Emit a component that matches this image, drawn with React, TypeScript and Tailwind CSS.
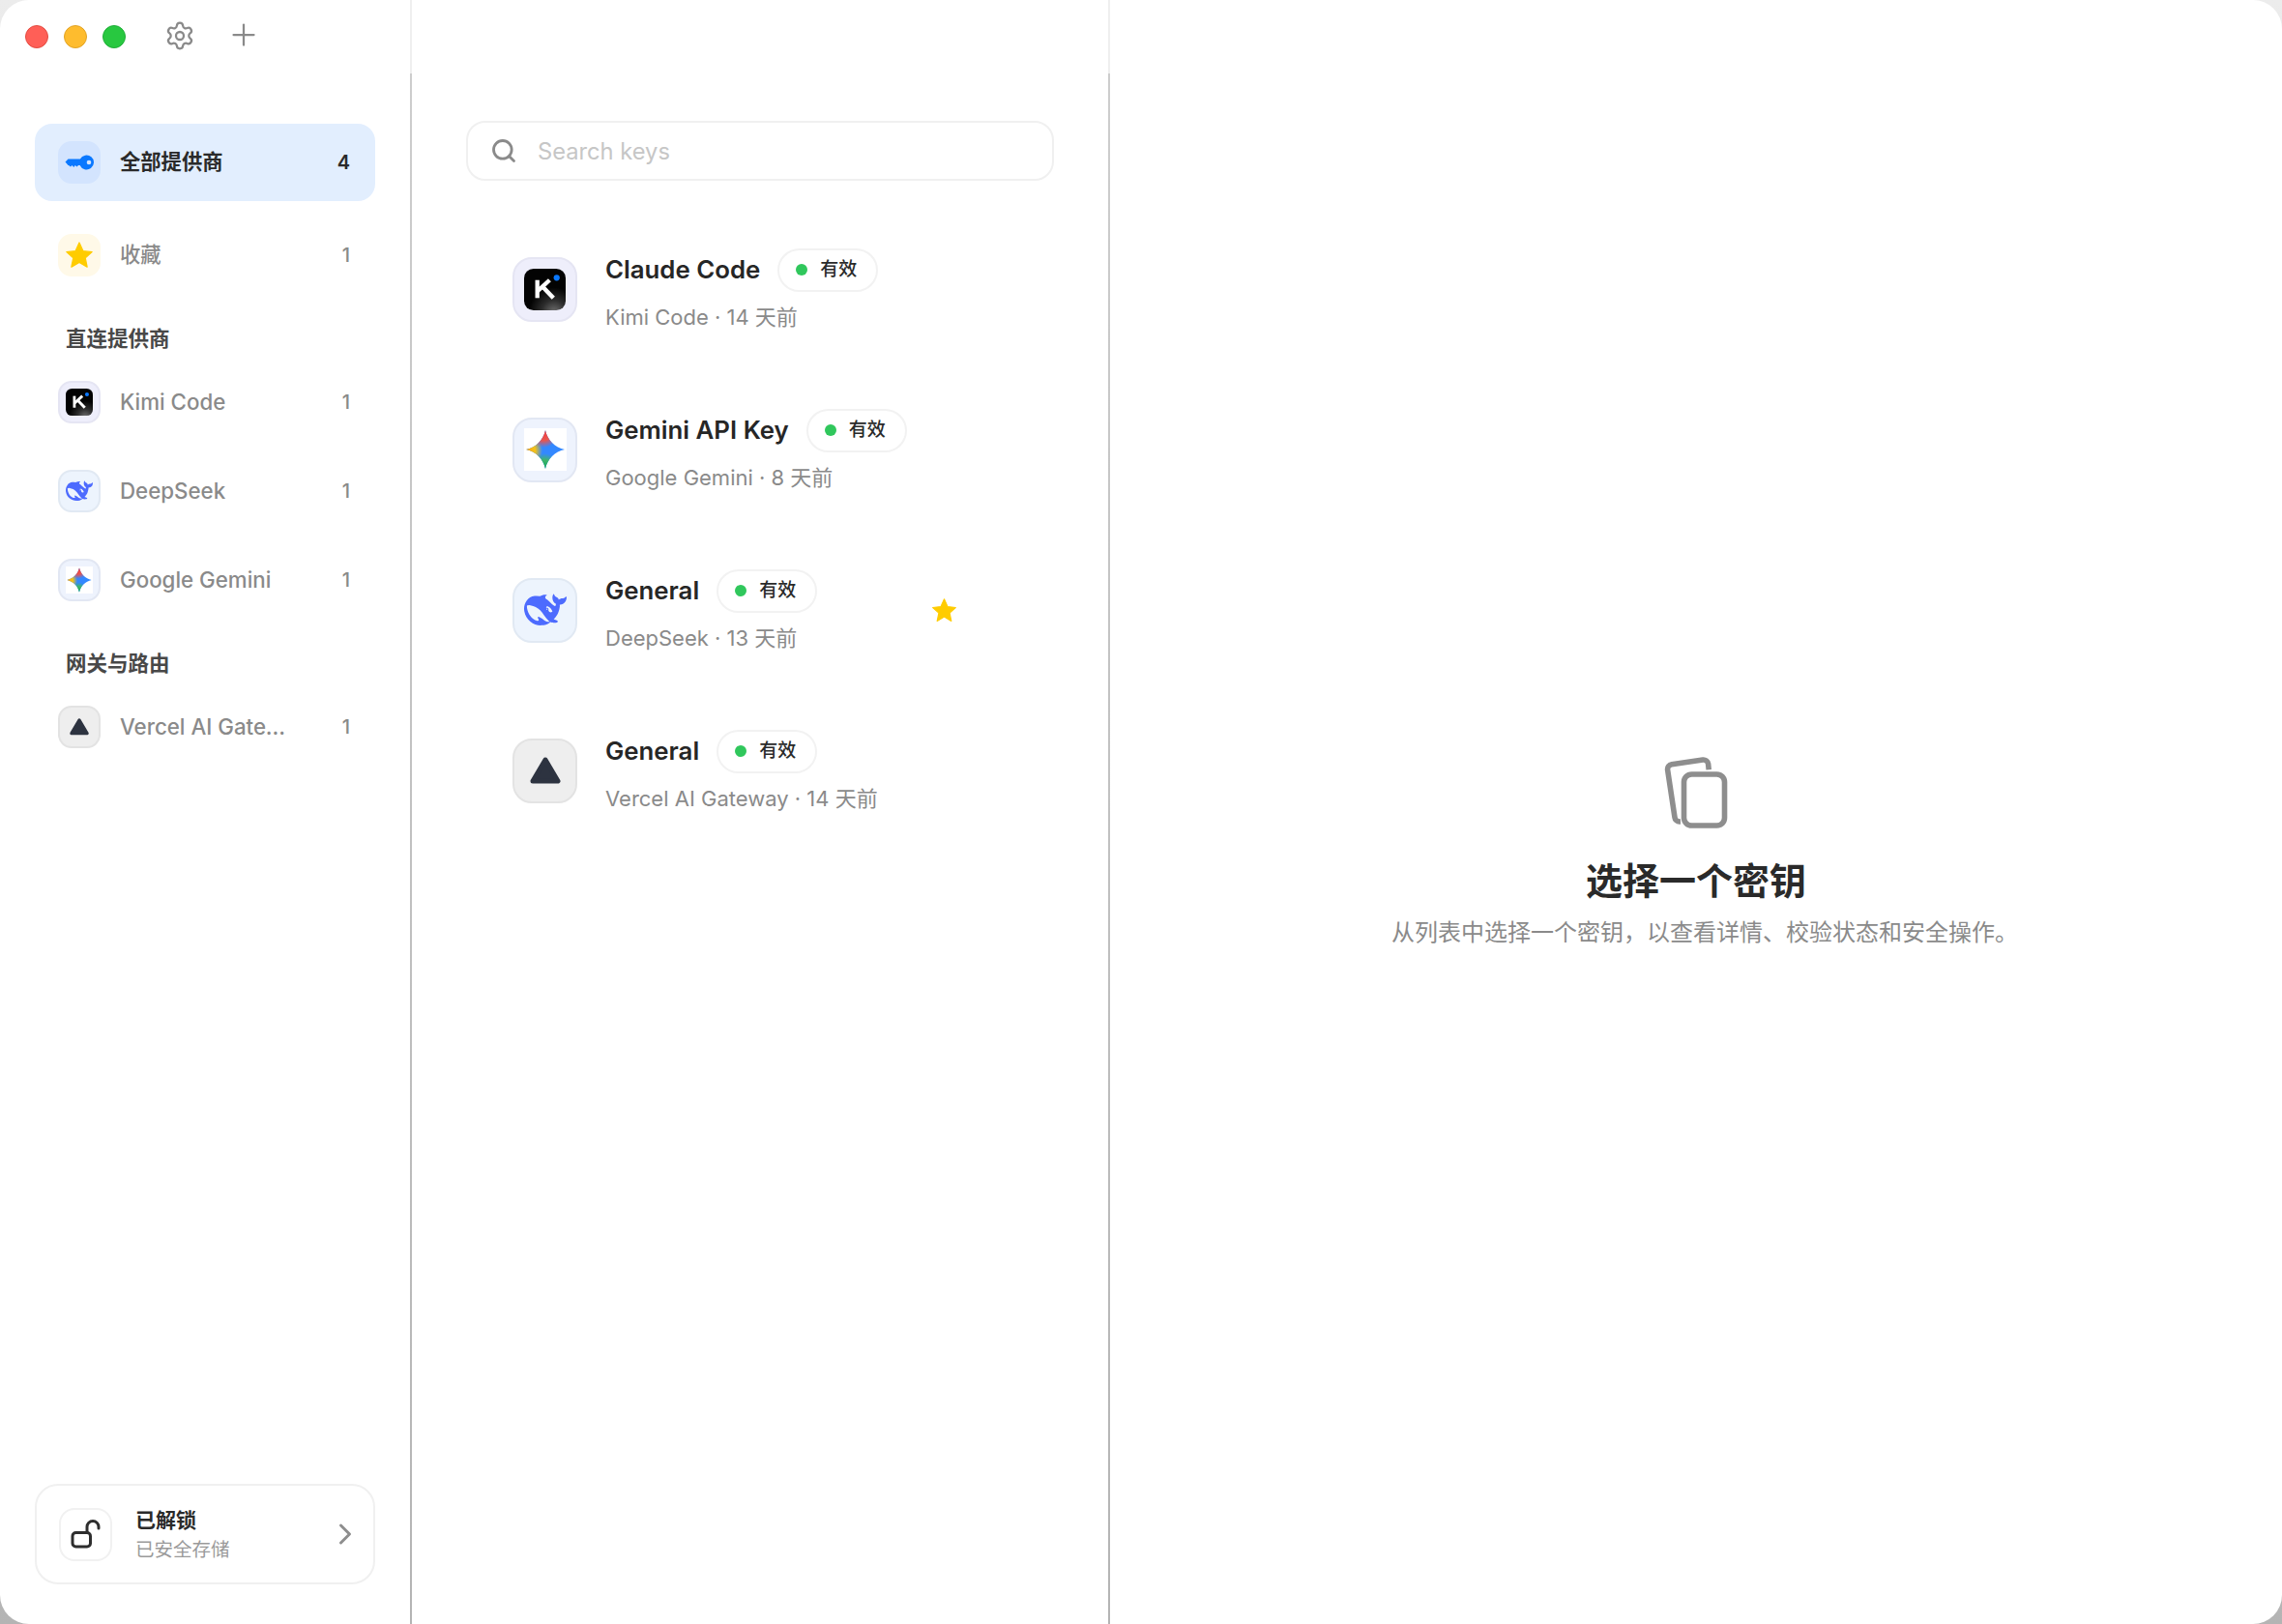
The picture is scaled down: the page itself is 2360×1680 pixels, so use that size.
import { Plus, Search, Settings, ChevronRight } from "lucide-react";

const WHALE =
  "M23.748 4.482c-.254-.124-.364.113-.512.234-.051.039-.094.09-.137.136-.372.397-.806.657-1.373.626-.829-.046-1.537.214-2.163.848-.133-.782-.575-1.248-1.247-1.548-.352-.156-.708-.311-.955-.65-.172-.241-.219-.51-.305-.774-.055-.16-.11-.323-.293-.35-.2-.031-.278.136-.356.276-.313.572-.434 1.202-.422 1.84.027 1.436.633 2.58 1.838 3.393.137.093.172.187.129.323-.082.28-.18.552-.266.833-.055.179-.137.217-.329.14a5.526 5.526 0 01-1.736-1.18c-.857-.828-1.631-1.742-2.597-2.458a11.365 11.365 0 00-.689-.471c-.985-.957.13-1.743.388-1.836.27-.098.093-.432-.779-.428-.872.004-1.67.295-2.687.684a3.055 3.055 0 01-.465.137 9.597 9.597 0 00-2.883-.102c-1.885.21-3.39 1.102-4.497 2.623C.082 8.606-.231 10.684.152 12.85c.403 2.284 1.569 4.175 3.36 5.653 1.858 1.533 3.997 2.284 6.438 2.14 1.482-.085 3.133-.284 4.994-1.86.47.234.962.327 1.78.397.63.059 1.236-.03 1.705-.128.735-.156.684-.837.419-.961-2.155-1.004-1.682-.595-2.113-.926 1.096-1.296 2.746-2.642 3.392-7.003.05-.347.007-.565 0-.845-.004-.17.035-.237.23-.256a4.173 4.173 0 001.545-.475c1.396-.763 1.96-2.015 2.093-3.517.02-.23-.004-.467-.247-.588zM11.581 18c-2.089-1.642-3.102-2.183-3.52-2.16-.392.024-.321.471-.235.763.09.288.207.486.371.739.114.167.192.416-.113.603-.673.416-1.842-.14-1.897-.167-1.361-.802-2.5-1.86-3.301-3.307-.774-1.393-1.224-2.887-1.298-4.482-.02-.386.093-.522.477-.592a4.696 4.696 0 011.529-.039c2.132.312 3.946 1.265 5.468 2.774.868.86 1.525 1.887 2.202 2.891.72 1.066 1.494 2.082 2.48 2.914.348.292.625.514.891.677-.802.09-2.14.11-3.054-.614zm1-6.44a.306.306 0 01.415-.287.302.302 0 01.2.288.306.306 0 01-.31.307.303.303 0 01-.304-.308zm3.11 1.596c-.2.081-.399.151-.59.16a1.245 1.245 0 01-.798-.254c-.274-.23-.47-.358-.552-.758a1.73 1.73 0 01.016-.588c.07-.327-.008-.537-.239-.727-.187-.156-.426-.199-.688-.199a.559.559 0 01-.254-.078c-.11-.054-.2-.19-.114-.358.028-.054.16-.186.192-.21.356-.202.767-.136 1.146.016.352.144.618.408 1.001.782.391.451.462.576.685.914.176.265.336.537.445.848.067.195-.019.354-.25.452z";

const StarIcon = ({ size }: { size: number }) => (
  <svg width={size} height={size} viewBox="0 0 24 24">
    <path
      d="M12 1.6l3.1 6.9 7.4.8-5.5 5 1.5 7.4-6.5-3.8-6.5 3.8L7 14.3l-5.5-5 7.4-.8z"
      fill="#ffcc00"
      stroke="#ffcc00"
      strokeWidth="1"
      strokeLinejoin="round"
    />
  </svg>
);

const KeyIcon = () => (
  <svg width="30" height="16" viewBox="0 0 30 16">
    <path
      d="M0.5 7.5L3.5 4.5H15.87A7.5 7.5 0 1 1 15.63 11H14l-1.5 1.5-1.7-1.5-1.5 2-1.8-2-1.5 1.5L4 11H3.5z"
      fill="#0a78ff"
    />
    <circle cx="25" cy="8" r="2.3" fill="#d3e4fe" />
  </svg>
);

const KimiLogo = ({ size }: { size: number }) => (
  <svg width={size} height={size} viewBox="0 0 44 44">
    <defs>
      <radialGradient id={`kimi-haze-${size}`} cx="0.72" cy="1.05" r="0.6">
        <stop offset="0" stopColor="#707070" />
        <stop offset="0.5" stopColor="#2c2c2c" />
        <stop offset="1" stopColor="#030303" />
      </radialGradient>
    </defs>
    <rect width="44" height="44" rx="10" fill={`url(#kimi-haze-${size})`} />
    <line x1="14" y1="12" x2="14" y2="31" stroke="#fff" strokeWidth="4.4" />
    <line x1="14" y1="24" x2="27" y2="12" stroke="#fff" strokeWidth="4.4" />
    <line x1="20" y1="19.5" x2="31" y2="31" stroke="#fff" strokeWidth="4.6" />
    <circle cx="34.5" cy="9.5" r="3.2" fill="#0a78ff" />
  </svg>
);

const WhaleLogo = ({ size }: { size: number }) => (
  <svg width={size} height={size} viewBox="0 0 24 24">
    <path d={WHALE} fill="#4d6bfe" />
  </svg>
);

const GeminiLogo = ({ size }: { size: number }) => (
  <svg width={size} height={size} viewBox="0 0 44 44">
    <defs>
      <clipPath id={`gem-clip-${size}`}>
        <path d="M22 2C24 12 32 20 42 22 32 24 24 32 22 42 20 32 12 24 2 22 12 20 20 12 22 2Z" />
      </clipPath>
      <radialGradient id={`gem-r-${size}`} gradientUnits="userSpaceOnUse" cx="20" cy="4" r="16">
        <stop offset="0" stopColor="#f53d3d" />
        <stop offset="0.55" stopColor="#e8554f" />
        <stop offset="1" stopColor="#e8554f" stopOpacity="0" />
      </radialGradient>
      <radialGradient id={`gem-y-${size}`} gradientUnits="userSpaceOnUse" cx="4" cy="23" r="15">
        <stop offset="0" stopColor="#ffa90f" />
        <stop offset="0.5" stopColor="#f2c21a" />
        <stop offset="1" stopColor="#f2c21a" stopOpacity="0" />
      </radialGradient>
      <radialGradient id={`gem-g-${size}`} gradientUnits="userSpaceOnUse" cx="21" cy="41" r="15">
        <stop offset="0" stopColor="#12a85a" />
        <stop offset="0.55" stopColor="#3fb56b" />
        <stop offset="1" stopColor="#3fb56b" stopOpacity="0" />
      </radialGradient>
    </defs>
    <g clipPath={`url(#gem-clip-${size})`}>
      <rect width="44" height="44" fill="#3388ff" />
      <rect width="44" height="44" fill={`url(#gem-y-${size})`} />
      <rect width="44" height="44" fill={`url(#gem-g-${size})`} />
      <rect width="44" height="44" fill={`url(#gem-r-${size})`} />
    </g>
  </svg>
);

const VercelLogo = ({ width }: { width: number }) => (
  <svg width={width} viewBox="0 0 32 28">
    <path
      d="M16 3L29 25H3z"
      fill="#2d3340"
      stroke="#2d3340"
      strokeWidth="5"
      strokeLinejoin="round"
    />
  </svg>
);

const DIVIDER = (
  <div className="flex w-[2px] shrink-0 flex-col">
    <div className="h-[76px] bg-[#efefef]" />
    <div className="flex-1 bg-gradient-to-b from-[#cdcdcd] to-[#b4b4b4]" />
  </div>
);

const providers = [
  { key: "kimi", name: "Kimi Code", tint: "bg-[#eeeefb] border-[#e5e5f3]" },
  { key: "deepseek", name: "DeepSeek", tint: "bg-[#edf4fd] border-[#e1e9f3]" },
  { key: "gemini", name: "Google Gemini", tint: "bg-[#eef3fd] border-[#e2e7f3]" },
];

const SmallLogo = ({ kind }: { kind: string }) => {
  if (kind === "kimi") return <KimiLogo size={28} />;
  if (kind === "deepseek") return <WhaleLogo size={28} />;
  if (kind === "gemini") {
    return (
      <span className="flex h-[28px] w-[28px] items-center justify-center bg-white">
        <GeminiLogo size={28} />
      </span>
    );
  }
  return <VercelLogo width={20} />;
};

const BigLogo = ({ kind }: { kind: string }) => {
  if (kind === "kimi") return <KimiLogo size={43} />;
  if (kind === "deepseek") return <WhaleLogo size={44} />;
  if (kind === "gemini") {
    return (
      <span className="flex h-[44px] w-[44px] items-center justify-center bg-white">
        <GeminiLogo size={44} />
      </span>
    );
  }
  return <VercelLogo width={32} />;
};

const SideRow = ({
  icon,
  tint,
  label,
  count,
  active,
  cjk,
  truncate,
}: {
  icon: React.ReactNode;
  tint: string;
  label: string;
  count: number;
  active?: boolean;
  cjk?: boolean;
  truncate?: boolean;
}) => (
  <div
    className={`flex h-[80px] items-center rounded-[18px] pl-[24px] pr-[26px] ${
      active ? "bg-[#e2eefe]" : ""
    }`}
  >
    <span
      className={`flex h-[44px] w-[44px] items-center justify-center rounded-[14px] border-2 ${tint}`}
    >
      {icon}
    </span>
    <span
      className={`ml-[20px] ${cjk ? "text-[21.3px]" : "text-[22.3px]"} ${
        truncate ? "max-w-[172px] truncate" : ""
      } ${active ? "font-semibold text-[#2a2a2a]" : "font-medium text-[#8a8a8a]"}`}
    >
      {label}
    </span>
    <span
      className={`ml-auto text-[20px] ${
        active ? "font-semibold text-[#2a2a2a]" : "font-medium text-[#8a8a8a]"
      }`}
    >
      {count}
    </span>
  </div>
);

const SectionLabel = ({ children }: { children: string }) => (
  <div className="pl-[32px] text-[21.5px] font-bold leading-[28px] text-[#484848]">{children}</div>
);

const keys = [
  { name: "Claude Code", source: "Kimi Code · 14 天前", kind: "kimi", tint: "bg-[#eeeefb] border-[#e5e5f3]" },
  { name: "Gemini API Key", source: "Google Gemini · 8 天前", kind: "gemini", tint: "bg-[#eef3fd] border-[#e2e7f3]" },
  { name: "General", source: "DeepSeek · 13 天前", kind: "deepseek", tint: "bg-[#edf4fd] border-[#e1e9f3]", starred: true },
  { name: "General", source: "Vercel AI Gateway · 14 天前", kind: "vercel", tint: "bg-[#eeeeee] border-[#e3e3e3]" },
];

const KeyRow = ({ item }: { item: (typeof keys)[number] }) => (
  <div className="flex h-[166px] items-center pl-[48px] pr-[100px]">
    <span
      className={`flex h-[67px] w-[67px] shrink-0 items-center justify-center rounded-[20px] border-2 ${item.tint}`}
    >
      <BigLogo kind={item.kind} />
    </span>
    <div className="ml-[29px] flex flex-col gap-[11px] pt-[1px]">
      <div className="flex h-[45px] items-center gap-[18px]">
        <span className="text-[25.8px] font-semibold text-[#262626]">{item.name}</span>
        <span className="flex h-[45px] w-[104px] items-center gap-[13px] rounded-full border-2 border-[#f2f2f2] pl-[17px]">
          <span className="h-[12px] w-[12px] rounded-full bg-[#30c75c]" />
          <span className="text-[19px] font-medium text-[#2a2a2a]">有效</span>
        </span>
      </div>
      <div className="text-[22px] leading-[30px] text-[#8a8a8a]">{item.source}</div>
    </div>
    {item.starred && (
      <span className="ml-auto">
        <StarIcon size={27} />
      </span>
    )}
  </div>
);

export default function App() {
  return (
    <div className="h-[1680px] w-[2360px] overflow-hidden bg-gradient-to-b from-[#ececec] to-[#b4b4b4] font-[family-name:Inter,'Noto_Sans_CJK_SC',sans-serif]">
      <div className="flex h-full overflow-hidden rounded-[30px] bg-white">
        <aside className="flex w-[424px] shrink-0 flex-col px-[36px]">
          <div className="-ml-[10px] mt-[26px] flex h-[24px] items-center">
            <span className="h-[24px] w-[24px] rounded-full border border-[#e24b41] bg-[#ff5f57]" />
            <span className="ml-[16px] h-[24px] w-[24px] rounded-full border border-[#e1a325] bg-[#febc2e]" />
            <span className="ml-[16px] h-[24px] w-[24px] rounded-full border border-[#1fad37] bg-[#28c840]" />
            <Settings size={32} strokeWidth={1.7} className="mb-[3px] ml-[40px] text-[#8a8a8a]" />
            <Plus size={36} strokeWidth={1.5} className="mb-[4px] ml-[32px] text-[#8a8a8a]" />
          </div>

          <nav className="mt-[78px] flex flex-col">
            <SideRow active cjk icon={<KeyIcon />} tint="bg-[#d3e4fe] border-[#d3e4fe]" label="全部提供商" count={4} />
            <div className="mt-[16px]">
              <SideRow cjk icon={<StarIcon size={30} />} tint="bg-[#fff9e8] border-[#fff9e8]" label="收藏" count={1} />
            </div>
            <div className="mb-[12px] mt-[32px]">
              <SectionLabel>直连提供商</SectionLabel>
            </div>
            <div className="flex flex-col gap-[12px]">
              {providers.map((p) => (
                <SideRow
                  key={p.key}
                  icon={<SmallLogo kind={p.key} />}
                  tint={p.tint}
                  label={p.name}
                  count={1}
                />
              ))}
            </div>
            <div className="mb-[12px] mt-[32px]">
              <SectionLabel>网关与路由</SectionLabel>
            </div>
            <SideRow
              truncate
              icon={<SmallLogo kind="vercel" />}
              tint="bg-[#eeeeee] border-[#e3e3e3]"
              label="Vercel AI Gateway"
              count={1}
            />
          </nav>

          <div className="mb-[41px] mt-auto flex h-[104px] items-center rounded-[24px] border-2 border-[#f0f0f0] pl-[23px] pr-[11px]">
            <span className="flex h-[55px] w-[55px] items-center justify-center rounded-[16px] border-2 border-[#f1f1f1]">
              <svg width="32" height="30" viewBox="0 0 32 30" fill="none" stroke="#2e2e2e" strokeWidth="3">
                <rect x="2" y="13.5" width="18.5" height="14.5" rx="3.5" />
                <path d="M17 13V7.5a6 6 0 0 1 12 0V9" strokeLinecap="round" />
              </svg>
            </span>
            <div className="ml-[24px] flex flex-col pt-[1px]">
              <span className="text-[21px] font-semibold leading-[30px] text-[#2a2a2a]">已解锁</span>
              <span className="text-[19.5px] leading-[30px] text-[#9a9a9a]">已安全存储</span>
            </div>
            <ChevronRight size={36} strokeWidth={2} className="ml-auto text-[#8e8e8e]" />
          </div>
        </aside>

        {DIVIDER}

        <section className="w-[720px] shrink-0 pt-[125px]">
          <div className="mx-[56px] flex h-[62px] w-[608px] items-center rounded-[20px] border-2 border-[#f0f0f0] pl-[23px]">
            <Search size={28} strokeWidth={2.4} className="text-[#8a8a8a]" />
            <input
              placeholder="Search keys"
              className="ml-[21px] flex-1 bg-transparent pt-[1px] text-[23.7px] outline-none placeholder:text-[#c6c6c6]"
            />
          </div>
          <div className="mx-[56px] mt-[29px] flex flex-col">
            {keys.map((item, i) => (
              <KeyRow key={i} item={item} />
            ))}
          </div>
        </section>

        {DIVIDER}

        <main className="flex flex-1 flex-col items-center justify-center pt-[85px]">
          <svg width="66" height="74" viewBox="0 0 66 74" fill="none" stroke="#8e8e8e" strokeWidth="5.6">
            <path d="M17 67h-1a5 5 0 0 1-5-4.4L3.6 13.4a5 5 0 0 1 4.2-5.6L40 3a5 5 0 0 1 5.6 4.2l.6 6" />
            <rect x="20.5" y="18" width="42" height="53" rx="8" fill="#fff" />
          </svg>
          <h1 className="mt-[28px] text-[38px] font-bold leading-[52px] text-[#2a2a2a]">选择一个密钥</h1>
          <p className="ml-[18px] mt-[10px] text-[24px] leading-[36px] text-[#8a8a8a]">
            从列表中选择一个密钥，以查看详情、校验状态和安全操作。
          </p>
        </main>
      </div>
    </div>
  );
}
